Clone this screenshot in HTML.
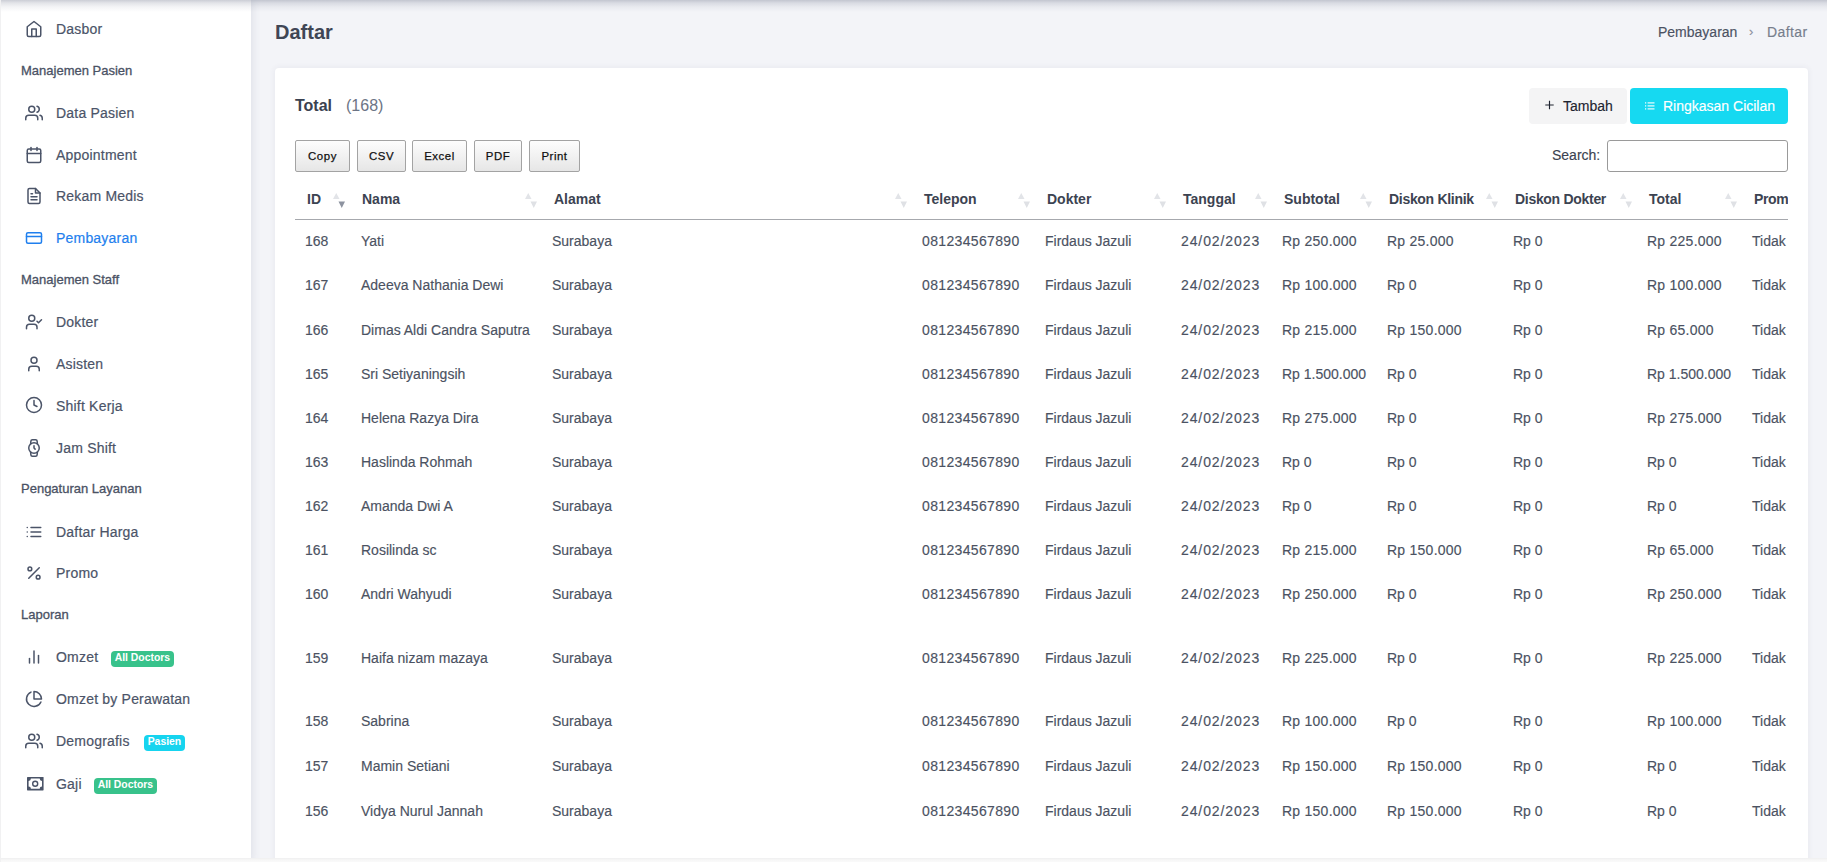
<!DOCTYPE html>
<html><head><meta charset="utf-8"><title>Daftar</title>
<style>
*{margin:0;padding:0;box-sizing:border-box}
html,body{width:1827px;height:862px;overflow:hidden}
body{position:relative;background:#f3f4f8;font-family:"Liberation Sans",sans-serif;color:#4b5468}
#sb{position:absolute;left:0;top:0;width:251px;height:862px;background:#fff;box-shadow:2px 0 8px rgba(60,70,100,.10)}
.ic{position:absolute;display:block}
.si{position:absolute;left:56px;font-size:14px;line-height:20px;white-space:nowrap;letter-spacing:.2px;-webkit-text-stroke:.2px currentColor}
.sh{position:absolute;left:21px;font-size:13px;line-height:20px;white-space:nowrap;color:#4a5264;-webkit-text-stroke:.3px currentColor}
.bd{position:absolute;height:15.8px;line-height:14px;padding:0 3.7px;border-radius:4px;color:#fff;font-weight:bold;font-size:10.4px;white-space:nowrap}
.bd.g{background:#38c28b}
.bd.c{background:#16d4ef}
#topsh{position:absolute;left:0;top:0;width:1827px;height:12px;background:linear-gradient(to bottom,rgba(40,50,80,.24) 0,rgba(40,50,80,.13) 3px,rgba(40,50,80,.05) 7px,rgba(40,50,80,0) 12px);z-index:5}
#title{position:absolute;left:275px;top:19.8px;font-size:20px;line-height:24px;font-weight:bold;color:#3f4655}
.bc{position:absolute;top:22.3px;font-size:14px;line-height:20px;white-space:nowrap;-webkit-text-stroke:.15px currentColor}
#card{position:absolute;left:275px;top:68px;width:1533px;height:830px;background:#fff;border-radius:4px;overflow:hidden;box-shadow:0 0 6px rgba(60,70,100,.08)}
#inner{position:absolute;left:-275px;top:-68px;width:1788px;height:900px}
#clip{position:absolute;left:0;top:0;width:1788px;height:900px;overflow:hidden}
.tot{position:absolute;left:295px;top:96.4px;font-size:16px;line-height:20px;font-weight:bold;color:#3a4150}
.cnt{position:absolute;left:346px;top:96.4px;font-size:16px;line-height:20px;color:#6c7485}
.btn{position:absolute;top:88px;height:36px;border-radius:4px;font-size:14px;line-height:36px;white-space:nowrap;-webkit-text-stroke:.15px currentColor}
.dtb{position:absolute;top:140px;height:32px;border:1px solid #a3a3a3;border-radius:2px;background:linear-gradient(to bottom,#fdfdfd 0%,#e6e6e6 100%);font-size:11.4px;line-height:31px;text-align:center;color:#111;letter-spacing:.55px;-webkit-text-stroke:.25px #111}
.th{position:absolute;font-size:14px;line-height:20px;font-weight:bold;color:#3c4351;white-space:nowrap}
.td{position:absolute;font-size:14px;line-height:20px;color:#4b5262;white-space:nowrap;-webkit-text-stroke:.15px currentColor}
.num{letter-spacing:.35px}.dt{letter-spacing:.9px}.rp{letter-spacing:.25px}
.srt{position:absolute}
#hl{position:absolute;left:295px;top:219px;width:1493px;height:1px;background:#a6a8ad}
#bot{position:absolute;left:0;top:858px;width:1827px;height:4px;background:linear-gradient(to bottom,#efeff0 0,#f7f7f7 2px,#fafafa 4px);z-index:6}
#lft{position:absolute;left:0;top:0;width:1px;height:862px;background:#f1f1f2;z-index:6}
</style></head><body>
<div id="sb">
<svg class="ic" style="left:24.8px;top:19.8px" width="18" height="18" viewBox="0 0 24 24" fill="none" stroke="#4b5468" stroke-width="2" stroke-linecap="round" stroke-linejoin="round"><path d="M3 9l9-7 9 7v11a2 2 0 0 1-2 2H5a2 2 0 0 1-2-2z"/><polyline points="9 22 9 12 15 12 15 22"/></svg><div class="si" style="top:19.1px;color:#4b5468">Dasbor</div><div class="sh" style="top:60.8px">Manajemen Pasien</div><svg class="ic" style="left:24.8px;top:103.9px" width="18" height="18" viewBox="0 0 24 24" fill="none" stroke="#4b5468" stroke-width="2" stroke-linecap="round" stroke-linejoin="round"><path d="M17 21v-2a4 4 0 0 0-4-4H5a4 4 0 0 0-4 4v2"/><circle cx="9" cy="7" r="4"/><path d="M23 21v-2a4 4 0 0 0-3-3.87"/><path d="M16 3.13a4 4 0 0 1 0 7.75"/></svg><div class="si" style="top:103.2px;color:#4b5468">Data Pasien</div><svg class="ic" style="left:24.8px;top:146.0px" width="18" height="18" viewBox="0 0 24 24" fill="none" stroke="#4b5468" stroke-width="2" stroke-linecap="round" stroke-linejoin="round"><path d="M8 2v4"/><path d="M16 2v4"/><rect width="18" height="18" x="3" y="4" rx="2"/><path d="M3 10h18"/></svg><div class="si" style="top:145.3px;color:#4b5468">Appointment</div><svg class="ic" style="left:24.8px;top:186.9px" width="18" height="18" viewBox="0 0 24 24" fill="none" stroke="#4b5468" stroke-width="2" stroke-linecap="round" stroke-linejoin="round"><path d="M14 2H6a2 2 0 0 0-2 2v16a2 2 0 0 0 2 2h12a2 2 0 0 0 2-2V8z"/><polyline points="14 2 14 8 20 8"/><line x1="16" y1="13" x2="8" y2="13"/><line x1="16" y1="17" x2="8" y2="17"/><polyline points="10 9 9 9 8 9"/></svg><div class="si" style="top:186.2px;color:#4b5468">Rekam Medis</div><svg class="ic" style="left:24.8px;top:228.6px" width="18" height="18" viewBox="0 0 24 24" fill="none" stroke="#1f7fee" stroke-width="2" stroke-linecap="round" stroke-linejoin="round"><rect width="20" height="14" x="2" y="5" rx="2"/><line x1="2" x2="22" y1="10" y2="10"/></svg><div class="si" style="top:227.9px;color:#1f7fee">Pembayaran</div><div class="sh" style="top:269.6px">Manajemen Staff</div><svg class="ic" style="left:24.8px;top:312.9px" width="18" height="18" viewBox="0 0 24 24" fill="none" stroke="#4b5468" stroke-width="2" stroke-linecap="round" stroke-linejoin="round"><path d="M16 21v-2a4 4 0 0 0-4-4H6a4 4 0 0 0-4 4v2"/><circle cx="9" cy="7" r="4"/><polyline points="16 11 18 13 22 9"/></svg><div class="si" style="top:312.2px;color:#4b5468">Dokter</div><svg class="ic" style="left:24.8px;top:354.7px" width="18" height="18" viewBox="0 0 24 24" fill="none" stroke="#4b5468" stroke-width="2" stroke-linecap="round" stroke-linejoin="round"><path d="M19 21v-2a4 4 0 0 0-4-4H9a4 4 0 0 0-4 4v2"/><circle cx="12" cy="7" r="4"/></svg><div class="si" style="top:354.0px;color:#4b5468">Asisten</div><svg class="ic" style="left:24.8px;top:396.4px" width="18" height="18" viewBox="0 0 24 24" fill="none" stroke="#4b5468" stroke-width="2" stroke-linecap="round" stroke-linejoin="round"><circle cx="12" cy="12" r="10"/><polyline points="12 6 12 12 16 14"/></svg><div class="si" style="top:395.7px;color:#4b5468">Shift Kerja</div><svg class="ic" style="left:24.8px;top:438.9px" width="18" height="18" viewBox="0 0 24 24" fill="none" stroke="#4b5468" stroke-width="2" stroke-linecap="round" stroke-linejoin="round"><circle cx="12" cy="12" r="7"/><polyline points="12 9 12 12 13.5 13.5"/><path d="M16.51 17.35l-.35 3.83a2 2 0 0 1-2 1.82H9.83a2 2 0 0 1-2-1.82l-.35-3.83m.01-10.7l.35-3.83A2 2 0 0 1 9.83 1h4.35a2 2 0 0 1 2 1.82l.35 3.83"/></svg><div class="si" style="top:438.2px;color:#4b5468">Jam Shift</div><div class="sh" style="top:479.4px">Pengaturan Layanan</div><svg class="ic" style="left:24.8px;top:522.8px" width="18" height="18" viewBox="0 0 24 24" fill="none" stroke="#4b5468" stroke-width="2" stroke-linecap="round" stroke-linejoin="round"><line x1="8" x2="21" y1="6" y2="6"/><line x1="8" x2="21" y1="12" y2="12"/><line x1="8" x2="21" y1="18" y2="18"/><line x1="3" x2="3.01" y1="6" y2="6"/><line x1="3" x2="3.01" y1="12" y2="12"/><line x1="3" x2="3.01" y1="18" y2="18"/></svg><div class="si" style="top:522.1px;color:#4b5468">Daftar Harga</div><svg class="ic" style="left:24.8px;top:563.6px" width="18" height="18" viewBox="0 0 24 24" fill="none" stroke="#4b5468" stroke-width="2" stroke-linecap="round" stroke-linejoin="round"><line x1="19" x2="5" y1="5" y2="19"/><circle cx="6.5" cy="6.5" r="2.5"/><circle cx="17.5" cy="17.5" r="2.5"/></svg><div class="si" style="top:562.9px;color:#4b5468">Promo</div><div class="sh" style="top:605.1px">Laporan</div><svg class="ic" style="left:24.8px;top:648.0px" width="18" height="18" viewBox="0 0 24 24" fill="none" stroke="#4b5468" stroke-width="2" stroke-linecap="round" stroke-linejoin="round"><line x1="18" y1="20" x2="18" y2="10"/><line x1="12" y1="20" x2="12" y2="4"/><line x1="6" y1="20" x2="6" y2="14"/></svg><div class="si" style="top:647.3px;color:#4b5468">Omzet</div><div class="bd g" style="left:111px;top:651.1px">All Doctors</div><svg class="ic" style="left:24.8px;top:689.7px" width="18" height="18" viewBox="0 0 24 24" fill="none" stroke="#4b5468" stroke-width="2" stroke-linecap="round" stroke-linejoin="round"><path d="M21.21 15.89A10 10 0 1 1 8 2.83"/><path d="M22 12A10 10 0 0 0 12 2v10z"/></svg><div class="si" style="top:689.0px;color:#4b5468">Omzet by Perawatan</div><svg class="ic" style="left:24.8px;top:732.0px" width="18" height="18" viewBox="0 0 24 24" fill="none" stroke="#4b5468" stroke-width="2" stroke-linecap="round" stroke-linejoin="round"><path d="M17 21v-2a4 4 0 0 0-4-4H5a4 4 0 0 0-4 4v2"/><circle cx="9" cy="7" r="4"/><path d="M23 21v-2a4 4 0 0 0-3-3.87"/><path d="M16 3.13a4 4 0 0 1 0 7.75"/></svg><div class="si" style="top:731.3px;color:#4b5468">Demografis</div><div class="bd c" style="left:144px;top:735.1px">Pasien</div><svg class="ic" style="left:27.1px;top:777.4px" width="16.6" height="13.4" viewBox="0 0 16.6 13.4"><rect x="0" y="0" width="16.6" height="13.4" rx="0.6" fill="#4b5468"/><path d="M3.9 1.6H12.7A2.3 2.3 0 0 0 15 3.9V9.5A2.3 2.3 0 0 0 12.7 11.8H3.9A2.3 2.3 0 0 0 1.6 9.5V3.9A2.3 2.3 0 0 0 3.9 1.6Z" fill="#fff"/><circle cx="8.2" cy="6.7" r="2.5" fill="none" stroke="#4b5468" stroke-width="1.4"/></svg><div class="si" style="top:774.4px;color:#4b5468">Gaji</div><div class="bd g" style="left:94px;top:778.2px">All Doctors</div>
</div>
<div id="title">Daftar</div>
<div class="bc" style="left:1658px;color:#4b5263">Pembayaran</div>
<div class="bc" style="left:1749px;color:#8a909c;font-size:13px">&#8250;</div>
<div class="bc" style="left:1767px;color:#777e8c;letter-spacing:.4px">Daftar</div>
<div id="card"><div id="inner"><div id="clip">
<div class="tot">Total</div><div class="cnt">(168)</div>
<div class="btn" style="left:1529px;width:98px;background:#f4f4f5;color:#1e2430">
 <svg style="position:absolute;left:16px;top:11.5px" width="9" height="10" viewBox="0 0 9 10"><path d="M4.5 0.8V9.2M0.3 5H8.7" stroke="#1e2430" stroke-width="1.15"/></svg>
 <span style="position:absolute;left:34px">Tambah</span></div>
<div class="btn" style="left:1630px;width:158px;background:#16d9f1;color:#fff">
 <svg style="position:absolute;left:15px;top:13.5px" width="9.5" height="8" viewBox="0 0 9.5 8" fill="#fff"><rect x="0" y="0.3" width="1.2" height="1.2"/><rect x="0" y="3.3" width="1.2" height="1.2"/><rect x="0" y="6.3" width="1.2" height="1.2"/><rect x="2.6" y="0.35" width="6.9" height="1.1"/><rect x="2.6" y="3.35" width="6.9" height="1.1"/><rect x="2.6" y="6.35" width="6.9" height="1.1"/></svg>
 <span style="position:absolute;left:33px">Ringkasan Cicilan</span></div>
<div class="dtb" style="left:295px;width:55px">Copy</div>
<div class="dtb" style="left:357px;width:49px">CSV</div>
<div class="dtb" style="left:412px;width:55px">Excel</div>
<div class="dtb" style="left:474px;width:48px">PDF</div>
<div class="dtb" style="left:529px;width:51px">Print</div>
<div class="td" style="left:1552px;top:145.3px;color:#3c4351">Search:</div>
<div style="position:absolute;left:1607px;top:140px;width:181px;height:32px;border:1px solid #9a9a9a;border-radius:3px;background:#fff"></div>
<div class="th" style="left:307px;top:189.1px">ID</div><svg class="srt" style="left:332.5px;top:192px" width="13" height="17" viewBox="0 0 13 17"><path d="M0 7L3.25 1L6.5 7Z" fill="#e2e4e8"/><path d="M5.5 9.5H12L8.75 16Z" fill="#8d93a0"/></svg><div class="th" style="left:362px;top:189.1px">Nama</div><svg class="srt" style="left:524.5px;top:192px" width="13" height="17" viewBox="0 0 13 17"><path d="M0 7L3.25 1L6.5 7Z" fill="#e2e4e8"/><path d="M5.5 9.5H12L8.75 16Z" fill="#dfe1e5"/></svg><div class="th" style="left:554px;top:189.1px">Alamat</div><svg class="srt" style="left:894.5px;top:192px" width="13" height="17" viewBox="0 0 13 17"><path d="M0 7L3.25 1L6.5 7Z" fill="#e2e4e8"/><path d="M5.5 9.5H12L8.75 16Z" fill="#dfe1e5"/></svg><div class="th" style="left:924px;top:189.1px">Telepon</div><svg class="srt" style="left:1017.5px;top:192px" width="13" height="17" viewBox="0 0 13 17"><path d="M0 7L3.25 1L6.5 7Z" fill="#e2e4e8"/><path d="M5.5 9.5H12L8.75 16Z" fill="#dfe1e5"/></svg><div class="th" style="left:1047px;top:189.1px">Dokter</div><svg class="srt" style="left:1153.5px;top:192px" width="13" height="17" viewBox="0 0 13 17"><path d="M0 7L3.25 1L6.5 7Z" fill="#e2e4e8"/><path d="M5.5 9.5H12L8.75 16Z" fill="#dfe1e5"/></svg><div class="th" style="left:1183px;top:189.1px">Tanggal</div><svg class="srt" style="left:1254.5px;top:192px" width="13" height="17" viewBox="0 0 13 17"><path d="M0 7L3.25 1L6.5 7Z" fill="#e2e4e8"/><path d="M5.5 9.5H12L8.75 16Z" fill="#dfe1e5"/></svg><div class="th" style="left:1284px;top:189.1px">Subtotal</div><svg class="srt" style="left:1359.5px;top:192px" width="13" height="17" viewBox="0 0 13 17"><path d="M0 7L3.25 1L6.5 7Z" fill="#e2e4e8"/><path d="M5.5 9.5H12L8.75 16Z" fill="#dfe1e5"/></svg><div class="th" style="left:1389px;top:189.1px;letter-spacing:-.3px">Diskon Klinik</div><svg class="srt" style="left:1485.5px;top:192px" width="13" height="17" viewBox="0 0 13 17"><path d="M0 7L3.25 1L6.5 7Z" fill="#e2e4e8"/><path d="M5.5 9.5H12L8.75 16Z" fill="#dfe1e5"/></svg><div class="th" style="left:1515px;top:189.1px;letter-spacing:-.3px">Diskon Dokter</div><svg class="srt" style="left:1619.5px;top:192px" width="13" height="17" viewBox="0 0 13 17"><path d="M0 7L3.25 1L6.5 7Z" fill="#e2e4e8"/><path d="M5.5 9.5H12L8.75 16Z" fill="#dfe1e5"/></svg><div class="th" style="left:1649px;top:189.1px">Total</div><svg class="srt" style="left:1724.5px;top:192px" width="13" height="17" viewBox="0 0 13 17"><path d="M0 7L3.25 1L6.5 7Z" fill="#e2e4e8"/><path d="M5.5 9.5H12L8.75 16Z" fill="#dfe1e5"/></svg><div class="th" style="left:1754px;top:189.1px;letter-spacing:-.4px">Prom</div><div class="td" style="left:305px;top:230.9px">168</div><div class="td" style="left:361px;top:230.9px">Yati</div><div class="td" style="left:552px;top:230.9px">Surabaya</div><div class="td num" style="left:922px;top:230.9px">081234567890</div><div class="td" style="left:1045px;top:230.9px">Firdaus Jazuli</div><div class="td dt" style="left:1181px;top:230.9px">24/02/2023</div><div class="td rp" style="left:1282px;top:230.9px">Rp 250.000</div><div class="td rp" style="left:1387px;top:230.9px">Rp 25.000</div><div class="td" style="left:1513px;top:230.9px">Rp 0</div><div class="td rp" style="left:1647px;top:230.9px">Rp 225.000</div><div class="td" style="left:1752px;top:230.9px">Tidak</div><div class="td" style="left:305px;top:274.8px">167</div><div class="td" style="left:361px;top:274.8px">Adeeva Nathania Dewi</div><div class="td" style="left:552px;top:274.8px">Surabaya</div><div class="td num" style="left:922px;top:274.8px">081234567890</div><div class="td" style="left:1045px;top:274.8px">Firdaus Jazuli</div><div class="td dt" style="left:1181px;top:274.8px">24/02/2023</div><div class="td rp" style="left:1282px;top:274.8px">Rp 100.000</div><div class="td" style="left:1387px;top:274.8px">Rp 0</div><div class="td" style="left:1513px;top:274.8px">Rp 0</div><div class="td rp" style="left:1647px;top:274.8px">Rp 100.000</div><div class="td" style="left:1752px;top:274.8px">Tidak</div><div class="td" style="left:305px;top:319.6px">166</div><div class="td" style="left:361px;top:319.6px">Dimas Aldi Candra Saputra</div><div class="td" style="left:552px;top:319.6px">Surabaya</div><div class="td num" style="left:922px;top:319.6px">081234567890</div><div class="td" style="left:1045px;top:319.6px">Firdaus Jazuli</div><div class="td dt" style="left:1181px;top:319.6px">24/02/2023</div><div class="td rp" style="left:1282px;top:319.6px">Rp 215.000</div><div class="td rp" style="left:1387px;top:319.6px">Rp 150.000</div><div class="td" style="left:1513px;top:319.6px">Rp 0</div><div class="td rp" style="left:1647px;top:319.6px">Rp 65.000</div><div class="td" style="left:1752px;top:319.6px">Tidak</div><div class="td" style="left:305px;top:363.7px">165</div><div class="td" style="left:361px;top:363.7px">Sri Setiyaningsih</div><div class="td" style="left:552px;top:363.7px">Surabaya</div><div class="td num" style="left:922px;top:363.7px">081234567890</div><div class="td" style="left:1045px;top:363.7px">Firdaus Jazuli</div><div class="td dt" style="left:1181px;top:363.7px">24/02/2023</div><div class="td" style="left:1282px;top:363.7px">Rp 1.500.000</div><div class="td" style="left:1387px;top:363.7px">Rp 0</div><div class="td" style="left:1513px;top:363.7px">Rp 0</div><div class="td" style="left:1647px;top:363.7px">Rp 1.500.000</div><div class="td" style="left:1752px;top:363.7px">Tidak</div><div class="td" style="left:305px;top:407.8px">164</div><div class="td" style="left:361px;top:407.8px">Helena Razya Dira</div><div class="td" style="left:552px;top:407.8px">Surabaya</div><div class="td num" style="left:922px;top:407.8px">081234567890</div><div class="td" style="left:1045px;top:407.8px">Firdaus Jazuli</div><div class="td dt" style="left:1181px;top:407.8px">24/02/2023</div><div class="td rp" style="left:1282px;top:407.8px">Rp 275.000</div><div class="td" style="left:1387px;top:407.8px">Rp 0</div><div class="td" style="left:1513px;top:407.8px">Rp 0</div><div class="td rp" style="left:1647px;top:407.8px">Rp 275.000</div><div class="td" style="left:1752px;top:407.8px">Tidak</div><div class="td" style="left:305px;top:452.0px">163</div><div class="td" style="left:361px;top:452.0px">Haslinda Rohmah</div><div class="td" style="left:552px;top:452.0px">Surabaya</div><div class="td num" style="left:922px;top:452.0px">081234567890</div><div class="td" style="left:1045px;top:452.0px">Firdaus Jazuli</div><div class="td dt" style="left:1181px;top:452.0px">24/02/2023</div><div class="td" style="left:1282px;top:452.0px">Rp 0</div><div class="td" style="left:1387px;top:452.0px">Rp 0</div><div class="td" style="left:1513px;top:452.0px">Rp 0</div><div class="td" style="left:1647px;top:452.0px">Rp 0</div><div class="td" style="left:1752px;top:452.0px">Tidak</div><div class="td" style="left:305px;top:496.2px">162</div><div class="td" style="left:361px;top:496.2px">Amanda Dwi A</div><div class="td" style="left:552px;top:496.2px">Surabaya</div><div class="td num" style="left:922px;top:496.2px">081234567890</div><div class="td" style="left:1045px;top:496.2px">Firdaus Jazuli</div><div class="td dt" style="left:1181px;top:496.2px">24/02/2023</div><div class="td" style="left:1282px;top:496.2px">Rp 0</div><div class="td" style="left:1387px;top:496.2px">Rp 0</div><div class="td" style="left:1513px;top:496.2px">Rp 0</div><div class="td" style="left:1647px;top:496.2px">Rp 0</div><div class="td" style="left:1752px;top:496.2px">Tidak</div><div class="td" style="left:305px;top:540.2px">161</div><div class="td" style="left:361px;top:540.2px">Rosilinda sc</div><div class="td" style="left:552px;top:540.2px">Surabaya</div><div class="td num" style="left:922px;top:540.2px">081234567890</div><div class="td" style="left:1045px;top:540.2px">Firdaus Jazuli</div><div class="td dt" style="left:1181px;top:540.2px">24/02/2023</div><div class="td rp" style="left:1282px;top:540.2px">Rp 215.000</div><div class="td rp" style="left:1387px;top:540.2px">Rp 150.000</div><div class="td" style="left:1513px;top:540.2px">Rp 0</div><div class="td rp" style="left:1647px;top:540.2px">Rp 65.000</div><div class="td" style="left:1752px;top:540.2px">Tidak</div><div class="td" style="left:305px;top:584.0px">160</div><div class="td" style="left:361px;top:584.0px">Andri Wahyudi</div><div class="td" style="left:552px;top:584.0px">Surabaya</div><div class="td num" style="left:922px;top:584.0px">081234567890</div><div class="td" style="left:1045px;top:584.0px">Firdaus Jazuli</div><div class="td dt" style="left:1181px;top:584.0px">24/02/2023</div><div class="td rp" style="left:1282px;top:584.0px">Rp 250.000</div><div class="td" style="left:1387px;top:584.0px">Rp 0</div><div class="td" style="left:1513px;top:584.0px">Rp 0</div><div class="td rp" style="left:1647px;top:584.0px">Rp 250.000</div><div class="td" style="left:1752px;top:584.0px">Tidak</div><div class="td" style="left:305px;top:648.2px">159</div><div class="td" style="left:361px;top:648.2px">Haifa nizam mazaya</div><div class="td" style="left:552px;top:648.2px">Surabaya</div><div class="td num" style="left:922px;top:648.2px">081234567890</div><div class="td" style="left:1045px;top:648.2px">Firdaus Jazuli</div><div class="td dt" style="left:1181px;top:648.2px">24/02/2023</div><div class="td rp" style="left:1282px;top:648.2px">Rp 225.000</div><div class="td" style="left:1387px;top:648.2px">Rp 0</div><div class="td" style="left:1513px;top:648.2px">Rp 0</div><div class="td rp" style="left:1647px;top:648.2px">Rp 225.000</div><div class="td" style="left:1752px;top:648.2px">Tidak</div><div class="td" style="left:305px;top:711.0px">158</div><div class="td" style="left:361px;top:711.0px">Sabrina</div><div class="td" style="left:552px;top:711.0px">Surabaya</div><div class="td num" style="left:922px;top:711.0px">081234567890</div><div class="td" style="left:1045px;top:711.0px">Firdaus Jazuli</div><div class="td dt" style="left:1181px;top:711.0px">24/02/2023</div><div class="td rp" style="left:1282px;top:711.0px">Rp 100.000</div><div class="td" style="left:1387px;top:711.0px">Rp 0</div><div class="td" style="left:1513px;top:711.0px">Rp 0</div><div class="td rp" style="left:1647px;top:711.0px">Rp 100.000</div><div class="td" style="left:1752px;top:711.0px">Tidak</div><div class="td" style="left:305px;top:756.0px">157</div><div class="td" style="left:361px;top:756.0px">Mamin Setiani</div><div class="td" style="left:552px;top:756.0px">Surabaya</div><div class="td num" style="left:922px;top:756.0px">081234567890</div><div class="td" style="left:1045px;top:756.0px">Firdaus Jazuli</div><div class="td dt" style="left:1181px;top:756.0px">24/02/2023</div><div class="td rp" style="left:1282px;top:756.0px">Rp 150.000</div><div class="td rp" style="left:1387px;top:756.0px">Rp 150.000</div><div class="td" style="left:1513px;top:756.0px">Rp 0</div><div class="td" style="left:1647px;top:756.0px">Rp 0</div><div class="td" style="left:1752px;top:756.0px">Tidak</div><div class="td" style="left:305px;top:800.8px">156</div><div class="td" style="left:361px;top:800.8px">Vidya Nurul Jannah</div><div class="td" style="left:552px;top:800.8px">Surabaya</div><div class="td num" style="left:922px;top:800.8px">081234567890</div><div class="td" style="left:1045px;top:800.8px">Firdaus Jazuli</div><div class="td dt" style="left:1181px;top:800.8px">24/02/2023</div><div class="td rp" style="left:1282px;top:800.8px">Rp 150.000</div><div class="td rp" style="left:1387px;top:800.8px">Rp 150.000</div><div class="td" style="left:1513px;top:800.8px">Rp 0</div><div class="td" style="left:1647px;top:800.8px">Rp 0</div><div class="td" style="left:1752px;top:800.8px">Tidak</div>
<div id="hl"></div>
</div></div></div>
<div id="topsh"></div>
<div id="bot"></div><div id="lft"></div>
</body></html>
